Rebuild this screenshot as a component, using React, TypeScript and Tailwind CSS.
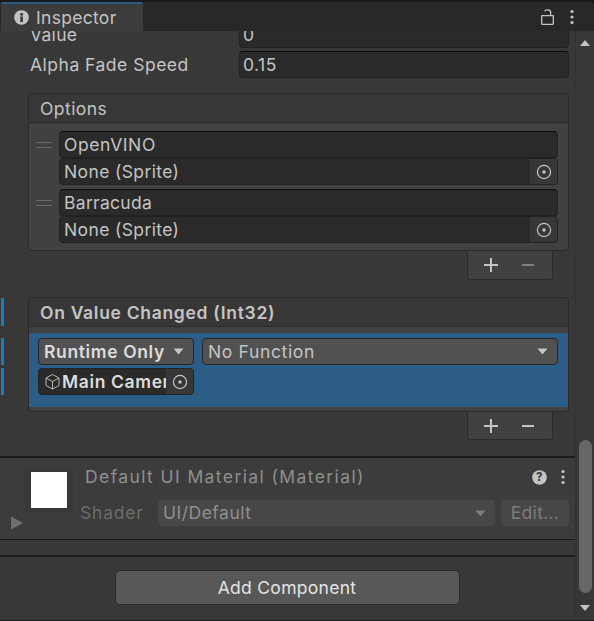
const Target = () => (
  <svg width="16" height="16" viewBox="0 0 16 16" fill="none">
    <circle cx="8" cy="8" r="6.6" stroke="#c4c4c4" strokeWidth="1.2" />
    <circle cx="8" cy="8" r="1.7" fill="#c4c4c4" />
  </svg>
);

const Caret = ({ color = "#c4c4c4" }: { color?: string }) => (
  <svg width="11" height="7" viewBox="0 0 11 7">
    <path d="M0.5 0.5h10L5.5 6.5z" fill={color} />
  </svg>
);

const Kebab = () => (
  <svg width="6" height="16" viewBox="0 0 6 16" fill="#c4c4c4">
    <circle cx="3" cy="2.5" r="1.6" />
    <circle cx="3" cy="8" r="1.6" />
    <circle cx="3" cy="13.5" r="1.6" />
  </svg>
);

const Handle = () => (
  <div className="flex h-[27px] w-[30px] shrink-0 flex-col items-center justify-center gap-[4px]">
    <div className="h-px w-[16px] bg-[#6a6a6a]" />
    <div className="h-px w-[16px] bg-[#6a6a6a]" />
  </div>
);

const TextField = ({ text, spacing }: { text: string; spacing: string }) => (
  <div className={`flex h-[27px] items-center rounded-[4px] border border-[#212121] border-t-[#0d0d0d] bg-[#2a2a2a] pl-[4px] leading-none text-[#c4c4c4] ${spacing}`}>
    {text}
  </div>
);

const ObjectField = () => (
  <div className="flex h-[27px] items-center justify-between overflow-hidden rounded-[4px] border border-[#212121] bg-[#2a2a2a] pl-[4px] leading-none tracking-[0.37px] text-[#c4c4c4]">
    <span className="pt-px">None (Sprite)</span>
    <span className="flex h-full w-[27px] items-center justify-center bg-[#373737]">
      <Target />
    </span>
  </div>
);

const Footer = ({ minusColor, height }: { minusColor: string; height: string }) => (
  <div className={`mr-[16px] flex w-[86px] items-center justify-center gap-[15px] self-end rounded-b-[4px] border-x border-b border-[#2a2a2a] bg-[#414141] pr-[2px] ${height}`}>
    <svg width="22" height="22" viewBox="0 0 22 22">
      <path d="M11 4v14M4 11h14" stroke="#c4c4c4" strokeWidth="2" />
    </svg>
    <svg width="22" height="22" viewBox="0 0 22 22">
      <path d="M5 11h12" stroke={minusColor} strokeWidth="2" />
    </svg>
  </div>
);

const PropRow = ({ label, value, spacing }: { label: string; value: string; spacing: string }) => (
  <div className="flex h-[27px] items-center pl-[30px] pr-[6px]">
    <span className={`w-[209px] shrink-0 leading-none text-[#c4c4c4] ${spacing}`}>{label}</span>
    <div className={`flex h-[27px] flex-1 items-center rounded-[4px] border border-[#212121] border-t-[#0d0d0d] bg-[#2a2a2a] pl-[3px] leading-none text-[#c4c4c4] ${spacing}`}>
      {value}
    </div>
  </div>
);

const Marker = ({ offset }: { offset: string }) => (
  <div className={`absolute bottom-0 top-0 w-[3px] bg-[#1580c0] ${offset}`} />
);

export default function App() {
  return (
    <div
      className="flex h-[621px] w-[594px] flex-col overflow-hidden bg-[#191919] pb-px text-[17.5px] tracking-[0.3px]"
      style={{ fontFamily: "Inter, 'Liberation Sans', sans-serif" }}
    >
      <div className="mt-[2px] flex h-[29px] shrink-0 rounded-tr-[4px] bg-[#282828]">
        <div className="ml-px flex w-[142px] flex-col overflow-hidden rounded-t-[3px] bg-[#3c3c3c]">
          <div className="h-[2px] bg-[#2c5d87]" />
          <div className="flex flex-1 items-center gap-[7px] pl-[13px] text-[#c4c4c4]">
            <svg width="15" height="15" viewBox="0 0 16 16">
              <circle cx="8" cy="8" r="7.8" fill="#c4c4c4" />
              <rect x="6.7" y="6.8" width="2.8" height="6" fill="#3c3c3c" />
              <circle cx="8.1" cy="4.4" r="1.6" fill="#3c3c3c" />
            </svg>
            <span className="leading-none">Inspector</span>
          </div>
        </div>
        <div className="ml-auto flex items-center gap-[15px] pr-[19px]">
          <svg width="13" height="16" viewBox="0 0 13 16" fill="none" stroke="#c4c4c4" strokeWidth="1.3">
            <rect x="0.7" y="6.7" width="11.6" height="8.6" rx="0.5" />
            <path d="M3.5 2.2C4.5 0.4 9.6 0.2 9.6 3v3.6" />
          </svg>
          <Kebab />
        </div>
      </div>

      <div className="flex min-h-0 flex-1 bg-[#3a3a3a]">
        <div className="relative flex min-w-0 flex-1 flex-col overflow-hidden bg-[#383838]">
          <div className="mt-[-10px] flex flex-col gap-[3px]">
            <PropRow label="Value" value="0" spacing="tracking-[0.3px]" />
            <PropRow label="Alpha Fade Speed" value="0.15" spacing="tracking-[0.5px]" />
          </div>

          <div className="mt-[15px] flex flex-col pl-[28px] pr-[6px]">
            <div className="flex h-[29px] items-center rounded-t-[4px] border border-b-0 border-[#2a2a2a] bg-[#373737] pl-[11px] pt-px leading-none tracking-[0.45px] text-[#c4c4c4]">
              Options
            </div>
            <div className="rounded-b-[4px] border border-[#2a2a2a] bg-[#414141] pb-[7px] pr-[10px] pt-[8px]">
              <div className="flex flex-col gap-[4px]">
                <div className="flex">
                  <Handle />
                  <div className="min-w-0 flex-1">
                    <TextField text="OpenVINO" spacing="tracking-[0.6px]" />
                    <ObjectField />
                  </div>
                </div>
                <div className="flex">
                  <Handle />
                  <div className="min-w-0 flex-1">
                    <TextField text="Barracuda" spacing="tracking-[0.3px]" />
                    <ObjectField />
                  </div>
                </div>
              </div>
            </div>
            <Footer minusColor="#808080" height="h-[29px]" />
          </div>

          <div className="mt-[17px] flex flex-col pl-[28px] pr-[6px]">
            <div className="relative flex h-[30px] items-center rounded-t-[4px] border border-[#2a2a2a] bg-[#373737] pl-[11px] pt-px font-semibold leading-none tracking-[0.7px] text-[#c4c4c4]">
              <Marker offset="-left-[28px]" />
              On Value Changed (Int32)
            </div>
            <div className="rounded-b-[4px] border-x border-b border-[#2a2a2a] bg-[#414141] pb-[4px] pt-[6px]">
              <div className="flex h-[74px] flex-col gap-[3px] bg-[#2c5d87] pl-[9px] pr-[10px] pt-[5px]">
                <div className="relative flex gap-[8px]">
                  <Marker offset="-left-[37px]" />
                  <div className="flex h-[27px] w-[156px] shrink-0 items-center justify-between rounded-[4px] border border-[#242424] bg-[#515151] pl-[5px] pr-[9px] font-semibold leading-none tracking-[0.63px] text-[#dcdcdc]">
                    <span className="pt-px">Runtime Only</span>
                    <Caret />
                  </div>
                  <div className="flex h-[27px] flex-1 items-center justify-between rounded-[4px] border border-[#242424] bg-[#515151] pl-[5px] pr-[9px] leading-none tracking-[0.65px] text-[#c4c4c4]">
                    <span className="pt-px">No Function</span>
                    <Caret />
                  </div>
                </div>
                <div className="relative h-[27px] w-[156px]">
                  <Marker offset="-left-[37px]" />
                  <div className="flex h-full items-center overflow-hidden rounded-[4px] border border-[#242424] bg-[#2a2a2a] pl-[5px] font-semibold leading-none tracking-[0.63px] text-[#dcdcdc]">
                    <svg className="mr-px shrink-0" width="17" height="17" viewBox="0 0 17 17" fill="none" stroke="#b8b8b8" strokeWidth="1">
                      <path d="M8.5 1.5l6.5 3.5v7.5l-6.5 3.5L2 12.5V5zM2 5l6.5 3.5L15 5M8.5 8.5V16" />
                    </svg>
                    <span className="w-[104px] shrink-0 overflow-hidden whitespace-nowrap pt-px">Main Camera</span>
                    <span className="flex h-full flex-1 items-center justify-center bg-[#373737]">
                      <Target />
                    </span>
                  </div>
                </div>
              </div>
            </div>
            <Footer minusColor="#c4c4c4" height="h-[28px]" />
          </div>

          <div className="mt-[16px] flex h-[84px] shrink-0 flex-col border-b border-t-2 border-[#1c1c1c] bg-[#3c3c3c]">
            <div className="flex">
              <div className="relative h-[80px] w-[85px] shrink-0">
                <div className="absolute left-[25px] top-[9px] h-[46px] w-[48px] bg-[#383838]" />
                <div className="absolute left-[31px] top-[14px] h-[36px] w-[36px] bg-white" />
                <svg className="absolute left-[11px] top-[58px]" width="12" height="14" viewBox="0 0 12 14">
                  <path d="M0 0.5l12 6.5L0 13.5z" fill="#6f6f6f" />
                </svg>
              </div>
              <div className="flex min-w-0 flex-1 flex-col pr-[6px]">
                <div className="flex h-[42px] items-start justify-between pr-[2px]">
                  <span className="mt-[10px] leading-none tracking-[1.4px] text-[#8f8f8f]">Default UI Material (Material)</span>
                  <span className="mt-[11px] flex items-center gap-[13px] pr-[1px]">
                    <svg width="15" height="15" viewBox="0 0 16 16">
                      <circle cx="8" cy="8" r="7.8" fill="#c4c4c4" />
                      <text x="8" y="12.2" textAnchor="middle" fontSize="12" fontWeight="800" fill="#3c3c3c" fontFamily="Inter, sans-serif">?</text>
                    </svg>
                    <Kebab />
                  </span>
                </div>
                <div className="-ml-[5px] flex items-center gap-[6px]">
                  <span className="w-[72px] shrink-0 leading-none tracking-[0.8px] text-[#6d6d6d]">Shader</span>
                  <div className="flex h-[26px] flex-1 items-center justify-between rounded-[4px] bg-[#474747] pl-[5px] pr-[9px] leading-none tracking-[0.5px] text-[#8f8f8f]">
                    <span>UI/Default</span>
                    <Caret color="#7d7d7d" />
                  </div>
                  <div className="flex h-[26px] w-[68px] shrink-0 items-center justify-center rounded-[4px] bg-[#474747] leading-none text-[#7d7d7d]">
                    Edit...
                  </div>
                </div>
              </div>
            </div>
          </div>

          <div className="mt-[15px] h-[2px] shrink-0 bg-[#1c1c1c]" />
          <div className="flex justify-center pt-[13px]">
            <div className="-ml-px flex h-[35px] w-[345px] items-center justify-center rounded-[5px] border border-[#2a2a2a] bg-[#585858] leading-none text-[#e4e4e4]">
              Add Component
            </div>
          </div>
        </div>

        <div className="flex w-[19px] shrink-0 flex-col items-center border-l border-[#333333] bg-[#373737]">
          <svg className="mt-[9px] shrink-0" width="10" height="6" viewBox="0 0 10 6">
            <path d="M0 6L5 0l5 6z" fill="#c4c4c4" />
          </svg>
          <div className="flex-1" />
          <div className="h-[153px] w-[13px] shrink-0 rounded-[7px] bg-[#676767]" />
          <svg className="mb-[9px] mt-[12px] shrink-0" width="10" height="6" viewBox="0 0 10 6">
            <path d="M0 0l5 6 5-6z" fill="#c4c4c4" />
          </svg>
        </div>
      </div>
    </div>
  );
}
